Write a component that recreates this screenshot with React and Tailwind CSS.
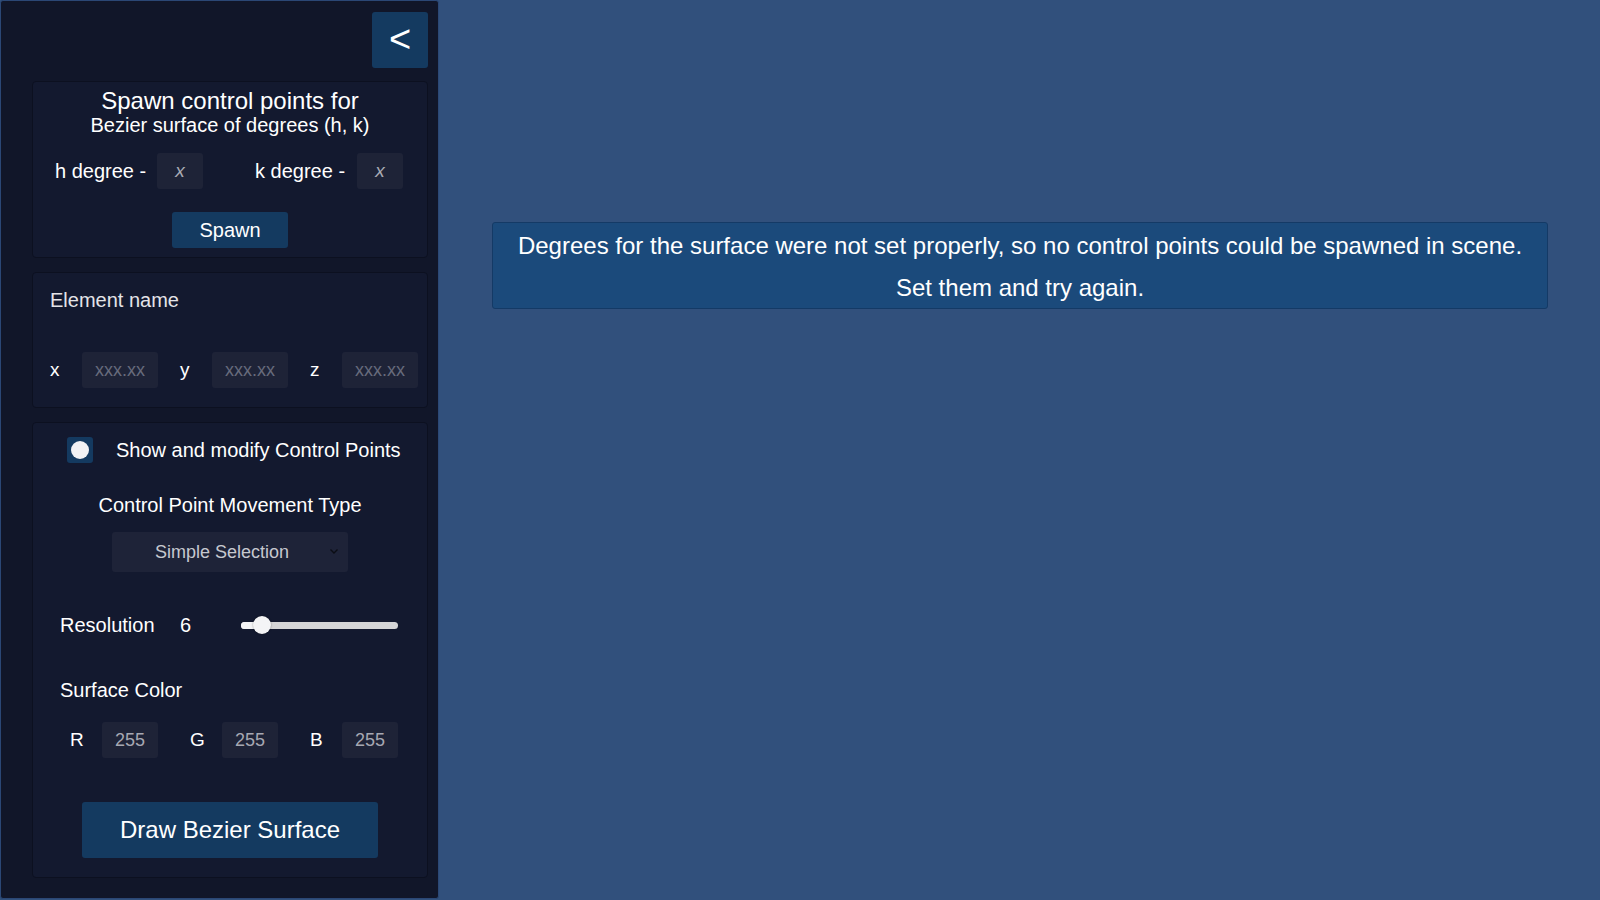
export default function App() {
  const font = { fontFamily: '"Liberation Sans", Arial, sans-serif' };
  return (
    <div className="w-[1600px] h-[900px] bg-[#31507c] flex" style={font}>
      {/* Side panel */}
      <div className="w-[439px] h-[899px] shrink-0 bg-[#111629] border border-[#2b4775] rounded-[3px] flex flex-col pl-[31px] pr-[10px]">
        <div className="flex justify-end mt-[11px]">
          <button className="w-[56px] h-[56px] bg-[#143a60] rounded-[3px] text-white text-[38px] leading-none flex items-center justify-center pb-[3px]">
            &lt;
          </button>
        </div>

        {/* Card 1 */}
        <div className="mt-[13px] h-[177px] bg-[#13192f] border border-[#0c1020] rounded-[4px] flex flex-col items-center pt-[6px] text-white">
          <div className="text-[24px] leading-[26px]">Spawn control points for</div>
          <div className="text-[20px] leading-[22px]">Bezier surface of degrees (h, k)</div>
          <div className="self-stretch flex items-center mt-[17px] pl-[22px] h-[36px]">
            <span className="w-[102px] text-[20px]">h degree -</span>
            <div className="w-[46px] h-[36px] bg-[#1e2337] rounded-[3px] flex items-center justify-center text-[19px] italic text-[#a8aab3]">x</div>
            <span className="w-[52px]" />
            <span className="w-[102px] text-[20px]">k degree -</span>
            <div className="w-[46px] h-[36px] bg-[#1e2337] rounded-[3px] flex items-center justify-center text-[19px] italic text-[#a8aab3]">x</div>
          </div>
          <button className="mt-[23px] w-[116px] h-[36px] bg-[#143a60] rounded-[3px] text-[20px] text-white">Spawn</button>
        </div>

        {/* Card 2 */}
        <div className="mt-[14px] h-[136px] bg-[#13192f] border border-[#0c1020] rounded-[4px] flex flex-col pt-[16px] pl-[17px] text-[#e4e4e8]">
          <div className="text-[20px] leading-[22px]">Element name</div>
          <div className="flex items-center mt-[41px] h-[36px]">
            {['x', 'y', 'z'].map((l, i) => (
              <div key={l} className={`flex items-center ${i > 0 ? 'ml-[22px]' : ''}`}>
                <span className="w-[32px] text-[19px] text-white">{l}</span>
                <div className="w-[76px] h-[36px] bg-[#1e2337] rounded-[3px] flex items-center justify-center text-[18px] text-[#676b7c]">xxx.xx</div>
              </div>
            ))}
          </div>
        </div>

        {/* Card 3 */}
        <div className="mt-[14px] h-[456px] bg-[#13192f] border border-[#0c1020] rounded-[4px] flex flex-col text-white">
          <div className="flex items-center mt-[14px] pl-[34px] h-[26px]">
            <div className="w-[26px] h-[26px] bg-[#143a60] rounded-[3px] flex items-center justify-center">
              <div className="w-[18px] h-[18px] rounded-full bg-[#f2f2f4]" />
            </div>
            <span className="ml-[23px] text-[20px]">Show and modify Control Points</span>
          </div>
          <div className="mt-[31px] text-[20px] leading-[22px] text-center">Control Point Movement Type</div>
          <div className="mt-[16px] self-center w-[236px] h-[40px] bg-[#1e2338] rounded-[3px] flex items-center relative">
            <div className="flex-1 pl-[10px] pr-[26px] text-center text-[18px] text-[#c6c8cf]">Simple Selection</div>
            <svg className="absolute right-[9px] top-[16px]" width="10" height="7" viewBox="0 0 10 7">
              <polyline points="1.5,1.5 5,5 8.5,1.5" fill="none" stroke="#0b0d14" strokeWidth="1.4" />
            </svg>
          </div>
          <div className="mt-[44px] h-[18px] flex items-center pl-[27px]">
            <span className="w-[120px] text-[20px]">Resolution</span>
            <span className="w-[61px] text-[20px]">6</span>
            <div className="relative w-[157px] h-[7px] rounded-full bg-[#d5d5d7]">
              <div className="absolute left-0 top-0 h-[7px] w-[21px] rounded-full bg-[#f4f4f6]" />
              <div className="absolute left-[12px] top-[-6px] w-[18px] h-[18px] rounded-full bg-[#f4f4f6] shadow-[0_0_2px_rgba(0,0,0,0.4)]" />
            </div>
          </div>
          <div className="mt-[45px] pl-[27px] text-[20px] leading-[22px]">Surface Color</div>
          <div className="mt-[21px] h-[36px] flex items-center pl-[37px]">
            {['R', 'G', 'B'].map((l, i) => (
              <div key={l} className={`flex items-center ${i > 0 ? 'ml-[32px]' : ''}`}>
                <span className="w-[32px] text-[19px] text-white">{l}</span>
                <div className="w-[56px] h-[36px] bg-[#1e2337] rounded-[3px] flex items-center justify-center text-[18px] text-[#a6a8b2]">255</div>
              </div>
            ))}
          </div>
          <button className="mt-[44px] self-center w-[296px] h-[56px] bg-[#143a60] rounded-[3px] text-[24px] text-white">Draw Bezier Surface</button>
        </div>
      </div>

      {/* Main area */}
      <div className="flex-1 pl-[53px] pt-[222px]">
        <div className="w-[1056px] h-[87px] bg-[#1b4a7b] border border-[#143a66] rounded-[3px] flex flex-col justify-center items-center text-white text-[24px] leading-[42px] whitespace-nowrap pt-[3px]">
          <div>Degrees for the surface were not set properly, so no control points could be spawned in scene.</div>
          <div>Set them and try again.</div>
        </div>
      </div>
    </div>
  );
}
